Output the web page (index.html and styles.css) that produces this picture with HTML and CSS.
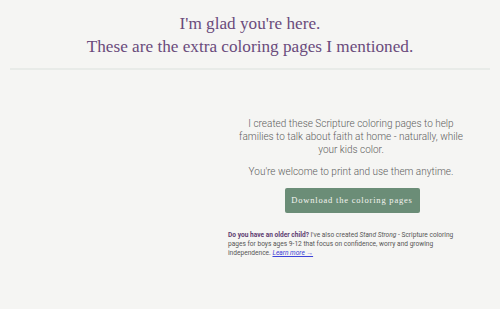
FILE: index.html
```html
<!DOCTYPE html>
<html>
<head>
<meta charset="utf-8">
<link rel="stylesheet" href="styles.css">
</head>
<body>
<header class="hero">
  <h1 class="title">I'm glad you're here.<br>These are the extra coloring pages I mentioned.</h1>
</header>
<main class="content">
  <div class="spacer"></div>
  <section class="panel">
    <p class="lead">I created these Scripture coloring pages to help families to talk about faith at home - naturally, while your kids color.</p>
    <p class="lead welcome">You're welcome to print and use them anytime.</p>
    <a class="btn" href="#">Download the coloring pages</a>
    <p class="note"><strong>Do you have an older child?</strong> I've also created <em>Stand Strong</em> - Scripture coloring pages for boys ages 9-12 that focus on confidence, worry and growing independence. <a class="more" href="#">Learn more →</a></p>
  </section>
</main>
</body>
</html>
```
FILE: styles.css
```css
html, body { margin: 0; padding: 0; }
body {
  background: #f5f5f3;
  width: 500px;
  height: 309px;
  overflow: hidden;
}
.hero {
  margin: 0 10px;
  padding: 12px 0 10px;
  border-bottom: 2px solid #e8ebe8;
  text-align: center;
}
.title {
  margin: 0;
  font-family: "Liberation Serif", serif;
  font-weight: normal;
  font-size: 17.2px;
  line-height: 23px;
  color: #6a4b7c;
}
.content {
  display: grid;
  grid-template-columns: 228px 246px;
  padding-top: 47px;
}
.panel {
  text-align: center;
}
.lead {
  margin: 0 0 9px;
  font-family: Roboto, sans-serif;
  font-weight: 300;
  font-size: 10px;
  line-height: 13px;
  color: #5e5e5e;
  padding: 0 10px;
}
.welcome { margin-bottom: 10px; }
.btn {
  display: inline-block;
  box-sizing: border-box;
  width: 135px;
  height: 25px;
  line-height: 25px;
  background: #6b8d77;
  border-radius: 2px;
  color: #f4f4f0;
  font-family: "Liberation Serif", serif;
  font-size: 8.5px;
  letter-spacing: 0.8px;
  text-decoration: none;
  margin-left: 2px;
  white-space: nowrap;
}
.note {
  margin: 18px 0 0;
  text-align: left;
  font-family: Roboto, sans-serif;
  font-size: 6.6px;
  line-height: 9px;
  color: #555;
  padding-right: 16px;
}
.note strong { color: #5e3d71; font-weight: 700; }
.more { color: #3d43d8; font-style: italic; }
```
